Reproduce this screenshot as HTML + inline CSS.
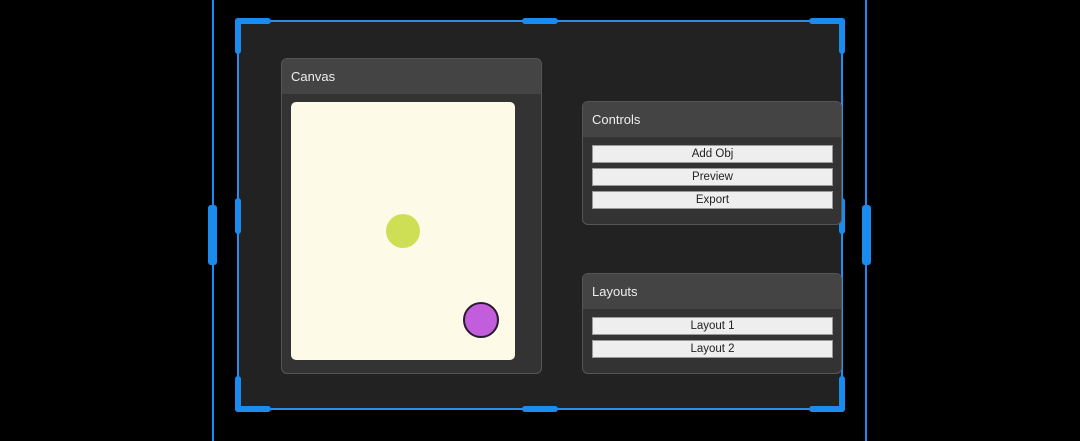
<!DOCTYPE html><html><head><style>
body{margin:0;width:1080px;height:441px;background:#000;position:relative;overflow:hidden;font-family:"Liberation Sans",sans-serif}
div{position:absolute;box-sizing:border-box}
.b{background:#1a8cf0;border-radius:3px}
.p{background:#333;border:1px solid #555;border-radius:6px;overflow:hidden}
.h{left:0;right:0;top:0;background:#444;color:#eee;font-size:13px;padding-left:9px}
.btn{left:9px;right:8px;height:18px;background:#eee;border:1px solid #999;color:#222;font-size:11.5px;text-align:center;line-height:16px}
</style></head><body>
<div style="left:212px;top:0;width:2px;height:441px;background:#1a8cf0"></div>
<div style="left:865px;top:0;width:2px;height:441px;background:#1a8cf0"></div>
<div class="b" style="left:208px;top:205px;width:9px;height:60px"></div>
<div class="b" style="left:862px;top:205px;width:9px;height:60px"></div>
<div style="left:237px;top:20px;width:606px;height:390px;background:#222;border:2px solid #2a8ee8"></div>
<div class="b" style="left:235px;top:18px;width:36px;height:6px"></div>
<div class="b" style="left:235px;top:18px;width:6px;height:36px"></div>
<div class="b" style="left:809px;top:18px;width:36px;height:6px"></div>
<div class="b" style="left:839px;top:18px;width:6px;height:36px"></div>
<div class="b" style="left:235px;top:406px;width:36px;height:6px"></div>
<div class="b" style="left:235px;top:376px;width:6px;height:36px"></div>
<div class="b" style="left:809px;top:406px;width:36px;height:6px"></div>
<div class="b" style="left:839px;top:376px;width:6px;height:36px"></div>
<div class="b" style="left:522px;top:18px;width:36px;height:6px"></div>
<div class="b" style="left:522px;top:406px;width:36px;height:6px"></div>
<div class="b" style="left:235px;top:198px;width:6px;height:36px"></div>
<div class="b" style="left:839px;top:198px;width:6px;height:36px"></div>
<div class="p" style="left:281px;top:58px;width:261px;height:316px">
<div class="h" style="height:35px;line-height:35px">Canvas</div>
<div style="left:9px;top:43px;width:224px;height:258px;background:#fdfbe8;border-radius:5px">
<div style="left:95px;top:112px;width:34px;height:34px;border-radius:50%;background:#cfdf55"></div>
<div style="left:172px;top:200px;width:36px;height:36px;border-radius:50%;background:#c25ddb;border:2px solid #2a1a30"></div>
</div></div>
<div class="p" style="left:582px;top:101px;width:260px;height:124px">
<div class="h" style="height:35px;line-height:35px">Controls</div>
<div class="btn" style="top:43px">Add Obj</div>
<div class="btn" style="top:66px">Preview</div>
<div class="btn" style="top:89px">Export</div>
</div>
<div class="p" style="left:582px;top:273px;width:260px;height:101px">
<div class="h" style="height:35px;line-height:35px">Layouts</div>
<div class="btn" style="top:43px">Layout 1</div>
<div class="btn" style="top:66px">Layout 2</div>
</div>
</body></html>
